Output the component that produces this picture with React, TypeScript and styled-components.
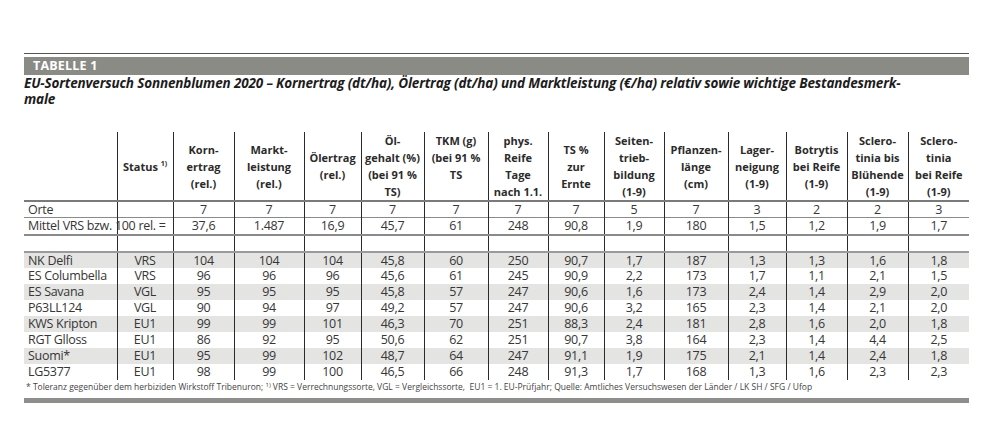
import styled, { createGlobalStyle } from 'styled-components';

const GlobalStyle = createGlobalStyle`
  body {
    margin: 0;
    background: #fff;
    font-family: "Open Sans", "Liberation Sans", sans-serif;
    color: #2b2b2b;
  }
`;

const Page = styled.div`
  width: 945px;
  padding: 53px 0 0 24px;
`;

const TopRule = styled.div`
  height: 1px;
  background: #555;
`;

const Band = styled.div`
  margin-top: 3px;
  height: 18px;
  background: #8b8b86;
  color: #fff;
  font-weight: 700;
  font-size: 12.5px;
  line-height: 18px;
  padding-left: 9px;
  letter-spacing: 0.2px;
`;

const Title = styled.h1`
  margin: 0;
  font-size: 13.5px;
  line-height: 16px;
  font-weight: 700;
  font-style: italic;
  color: #1c1c1c;
  letter-spacing: -0.15px;
`;

const Table = styled.table`
  margin-top: 25px;
  width: 945px;
  table-layout: fixed;
  border-collapse: collapse;
`;

const HeadRow = styled.tr`
  height: 69px;
`;

const HeadCell = styled.th`
  padding: 0;
  font-size: 11px;
  line-height: 17px;
  font-weight: 700;
  text-align: center;
  vertical-align: middle;
  color: #2b2b2b;
  border-left: 1px solid #2a2a2a;
  border-bottom: 2px solid #7a7a7a;
  &:first-child {
    border-left: none;
  }
  sup {
    font-size: 7px;
    line-height: 0;
    vertical-align: 5px;
  }
`;

const Row = styled.tr<{ $shade?: boolean; $line?: string; $h: number }>`
  height: ${(p) => p.$h}px;
  background: ${(p) => (p.$shade ? '#e4e4e2' : 'transparent')};
  border-bottom: ${(p) => p.$line ?? 'none'};
`;

const Cell = styled.td`
  padding: 0;
  font-size: 12.5px;
  line-height: 15px;
  letter-spacing: -0.3px;
  text-align: center;
  white-space: nowrap;
  color: #363636;
  border-left: 1px solid #2a2a2a;
  &:first-child {
    border-left: none;
    text-align: left;
    padding-left: 4px;
    overflow: visible;
  }
`;

const Foot = styled.p`
  margin: 1px 0 0 2px;
  font-size: 8.5px;
  line-height: 11px;
  color: #444;
  white-space: nowrap;
  sup {
    font-size: 6px;
    line-height: 0;
    vertical-align: 3px;
  }
`;

const BottomBar = styled.div`
  margin-top: 6px;
  height: 5px;
  background: #8e8e8b;
`;

const widths = [93, 56, 61, 70, 57, 63, 64, 60, 56, 60, 64, 58, 61, 61, 61];

const heads: React.ReactNode[] = [
  '',
  <>Status <sup>1)</sup></>,
  <>Korn-<br />ertrag<br />(rel.)</>,
  <>Markt-<br />leistung<br />(rel.)</>,
  <>Ölertrag<br />(rel.)</>,
  <>Öl-<br />gehalt (%)<br />(bei 91 %<br />TS)</>,
  <>TKM (g)<br />(bei 91 %<br />TS<br />&nbsp;</>,
  <>phys.<br />Reife<br />Tage<br />nach 1.1.</>,
  <>TS %<br />zur<br />Ernte</>,
  <>Seiten-<br />trieb-<br />bildung<br />(1-9)</>,
  <>Pflanzen-<br />länge<br />(cm)</>,
  <>Lager-<br />neigung<br />(1-9)</>,
  <>Botrytis<br />bei Reife<br />(1-9)</>,
  <>Sclero-<br />tinia bis<br />Blühende<br />(1-9)</>,
  <>Sclero-<br />tinia<br />bei Reife<br />(1-9)</>,
];

const orte = ['Orte', '', '7', '7', '7', '7', '7', '7', '7', '5', '7', '3', '2', '2', '3'];
const mittel = ['Mittel VRS bzw. 100 rel. =', '', '37,6', '1.487', '16,9', '45,7', '61', '248', '90,8', '1,9', '180', '1,5', '1,2', '1,9', '1,7'];

const sorten = [
  'NK Delfi|VRS|104|104|104|45,8|60|250|90,7|1,7|187|1,3|1,3|1,6|1,8',
  'ES Columbella|VRS|96|96|96|45,6|61|245|90,9|2,2|173|1,7|1,1|2,1|1,5',
  'ES Savana|VGL|95|95|95|45,8|57|247|90,6|1,6|173|2,4|1,4|2,9|2,0',
  'P63LL124|VGL|90|94|97|49,2|57|247|90,6|3,2|165|2,3|1,4|2,1|2,0',
  'KWS Kripton|EU1|99|99|101|46,3|70|251|88,3|2,4|181|2,8|1,6|2,0|1,8',
  'RGT Glloss|EU1|86|92|95|50,6|62|251|90,7|3,8|164|2,3|1,4|4,4|2,5',
  'Suomi*|EU1|95|99|102|48,7|64|247|91,1|1,9|175|2,1|1,4|2,4|1,8',
  'LG5377|EU1|98|99|100|46,5|66|248|91,3|1,7|168|1,3|1,6|2,3|2,3',
].map((r) => r.split('|'));

function App() {
  return (
    <Page>
      <GlobalStyle />
      <TopRule />
      <Band>TABELLE 1</Band>
      <Title>
        EU-Sortenversuch Sonnenblumen 2020 – Kornertrag (dt/ha), Ölertrag (dt/ha) und Marktleistung (€/ha) relativ sowie wichtige Bestandesmerk-
        <br />
        male
      </Title>
      <Table>
        <colgroup>
          {widths.map((w, i) => (
            <col key={i} style={{ width: w }} />
          ))}
        </colgroup>
        <thead>
          <HeadRow>
            {heads.map((h, i) => (
              <HeadCell key={i}>{h}</HeadCell>
            ))}
          </HeadRow>
        </thead>
        <tbody>
          <Row $h={14} $line="1px solid #8a8a8a">
            {orte.map((v, i) => <Cell key={i}>{v}</Cell>)}
          </Row>
          <Row $h={17} $line="2px solid #8a8a8a">
            {mittel.map((v, i) => <Cell key={i}>{v}</Cell>)}
          </Row>
          <Row $h={17} $line="2px solid #9a9a9a">
            {widths.map((_, i) => <Cell key={i} />)}
          </Row>
          {sorten.map((r, ri) => (
            <Row key={ri} $h={16} $shade={ri % 2 === 0}>
              {r.map((v, i) => <Cell key={i}>{v}</Cell>)}
            </Row>
          ))}
        </tbody>
      </Table>
      <Foot>
        * Toleranz gegenüber dem herbiziden Wirkstoff Tribenuron; <sup>1)</sup> VRS = Verrechnungssorte, VGL = Vergleichssorte,&nbsp; EU1 = 1. EU-Prüfjahr; Quelle: Amtliches Versuchswesen der Länder / LK SH / SFG / Ufop
      </Foot>
      <BottomBar />
    </Page>
  );
}

export default App;
